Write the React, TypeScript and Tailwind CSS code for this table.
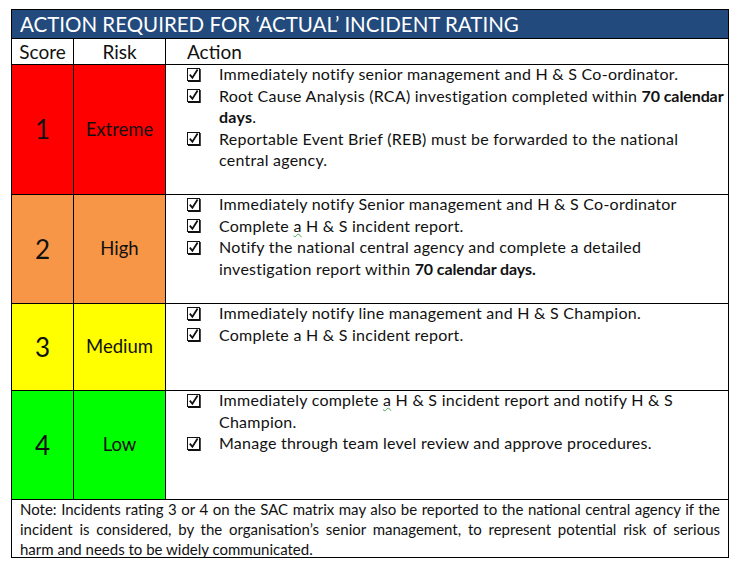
import type { ReactNode } from "react";

function CheckBox() {
  return (
    <svg width="14" height="14" viewBox="0 0 14 14" className="mt-[4.5px] shrink-0">
      <rect x="0.5" y="0.5" width="12" height="12" fill="white" stroke="#111" strokeWidth="1" />
      <path d="M13 1v12.5H1" fill="none" stroke="#111" strokeWidth="1.5" />
      <path d="M2.8 6.6l2.6 3.2L10.6 1.6" fill="none" stroke="#111" strokeWidth="1.8" />
    </svg>
  );
}

function Item({ children }: { children: ReactNode }) {
  return (
    <li className="flex">
      <div className="w-[32px] shrink-0">
        <CheckBox />
      </div>
      <div className="whitespace-nowrap">{children}</div>
    </li>
  );
}

type Row = {
  score: string;
  risk: string;
  color: string;
  height: string;
  items: ReactNode[];
};

const squiggle = "underline decoration-wavy decoration-[#4aa84a] decoration-1 underline-offset-[1px]";

const rows: Row[] = [
  {
    score: "1",
    risk: "Extreme",
    color: "bg-[#ff0000]",
    height: "h-[130px]",
    items: [
      "Immediately notify senior management and H & S Co-ordinator.",
      <>
        Root Cause Analysis (RCA) investigation completed within <b className="tracking-[-0.1px]">70 calendar</b>
        <br />
        <b>days</b>.
      </>,
      <>
        Reportable Event Brief (REB) must be forwarded to the national
        <br />
        central agency.
      </>,
    ],
  },
  {
    score: "2",
    risk: "High",
    color: "bg-[#f79646]",
    height: "h-[109px]",
    items: [
      "Immediately notify Senior management and H & S Co-ordinator",
      <>
        Complete <span className={squiggle}>a</span> H &amp; S incident report.
      </>,
      <>
        Notify the national central agency and complete a detailed
        <br />
        investigation report within <b className="tracking-[-0.1px]">70 calendar days.</b>
      </>,
    ],
  },
  {
    score: "3",
    risk: "Medium",
    color: "bg-[#ffff00]",
    height: "h-[87px]",
    items: [
      "Immediately notify line management and H & S Champion.",
      "Complete a H & S incident report.",
    ],
  },
  {
    score: "4",
    risk: "Low",
    color: "bg-[#00ff00]",
    height: "h-[109px]",
    items: [
      <>
        Immediately complete <span className={squiggle}>a</span> H &amp; S incident report and notify H &amp; S
        <br />
        Champion.
      </>,
      "Manage through team level review and approve procedures.",
    ],
  },
];

export default function App() {
  return (
    <div className="min-h-[569px] w-[737px] bg-white pl-[11px] pt-[9px] font-['Lato',sans-serif] text-[#111]">
      <div className="w-[718px] border border-black">
        {/* Title bar */}
        <div className="flex h-[29px] items-center border-b border-black bg-[#234a7c] pl-[8px] text-[20.5px] leading-none text-white">
          ACTION REQUIRED FOR ‘ACTUAL’ INCIDENT RATING
        </div>

        {/* Column headings */}
        <div className="flex h-[26px] border-b border-black text-[19px] leading-none">
          <div className="flex w-[62px] items-center justify-center border-r border-black">Score</div>
          <div className="flex w-[92px] items-center justify-center border-r border-black">Risk</div>
          <div className="flex flex-1 items-center pl-[21px]">Action</div>
        </div>

        {rows.map((r) => (
          <div key={r.score} className={`flex ${r.height} border-b border-black`}>
            <div className={`flex w-[62px] items-center justify-center border-r border-black text-[26px] ${r.color}`}>
              {r.score}
            </div>
            <div className={`flex w-[92px] items-center justify-center border-r border-black text-[18.5px] ${r.color}`}>
              {r.risk}
            </div>
            <ul className="-mt-[2px] flex-1 pl-[21px] text-[16px] leading-[21.5px] tracking-[0.25px]">
              {r.items.map((it, i) => (
                <Item key={i}>{it}</Item>
              ))}
            </ul>
          </div>
        ))}

        {/* Note */}
        <div className="h-[58px] px-[8px] text-[15px] leading-[20px]">
          <div className="-mt-[1px] text-justify [text-align-last:justify]">
            Note: Incidents rating 3 or 4 on the SAC matrix may also be reported to the national central agency if the
          </div>
          <div className="text-justify [text-align-last:justify]">
            incident is considered, by the organisation’s senior management, to represent potential risk of serious
          </div>
          <div>harm and needs to be widely communicated.</div>
        </div>
      </div>
    </div>
  );
}
